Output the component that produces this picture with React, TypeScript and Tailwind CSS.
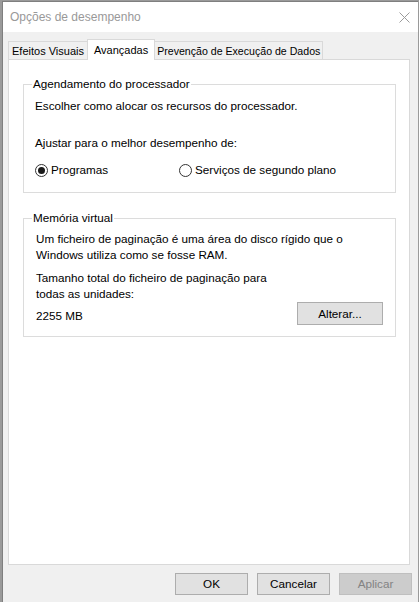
import React from 'react';

const font = "font-['Liberation_Sans',Arial,sans-serif]";

const Radio: React.FC<{ checked?: boolean; label: string; className?: string }> = ({ checked, label, className }) => (
  <label className={`flex items-center gap-[3px] ${className ?? ''}`}>
    <span className="flex h-[13px] w-[13px] items-center justify-center rounded-full border border-[#333333] bg-white">
      {checked && <span className="h-[7px] w-[7px] rounded-full bg-[#1a1a1a]" />}
    </span>
    <span>{label}</span>
  </label>
);

const DialogButton: React.FC<{ label: string; disabled?: boolean; className?: string }> = ({ label, disabled, className }) => (
  <button
    disabled={disabled}
    className={`h-[22px] border text-[11.7px] leading-[16px] ${
      disabled
        ? 'border-[#bfbfbf] bg-[#cccccc] text-[#838383]'
        : 'border-[#adadad] bg-[#e1e1e1] text-black'
    } ${className ?? ''}`}
  >
    {label}
  </button>
);

export default function App() {
  return (
    <div className={`h-[602px] w-[419px] bg-[#9a9a9a] pl-[2px] pt-[1px] ${font} text-[11.7px] leading-[16px] text-black`}>
      <div className="flex h-[601px] w-[416px] flex-col border-l border-t border-[#7f7f7f] bg-[#f0f0f0]">
        {/* title bar */}
        <div className="flex h-[30px] items-center justify-between bg-white pl-[7px] pr-[8px]">
          <span className="text-[12px] text-[#999999]">Opções de desempenho</span>
          <svg width="11" height="11" viewBox="0 0 11 11">
            <path d="M0.5 0.5 L10.5 10.5 M10.5 0.5 L0.5 10.5" stroke="#9b9b9b" strokeWidth="1" fill="none" />
          </svg>
        </div>

        {/* tabs */}
        <div className="ml-[5px] mt-[7px] flex items-end text-[11px]">
          <div className="relative z-0 -mr-px flex h-[18px] items-center border border-b-0 border-[#d9d9d9] bg-[#f0f0f0] px-[3px]">
            Efeitos Visuais
          </div>
          <div className="relative z-10 -mb-px flex h-[21px] items-center border border-b-0 border-[#d9d9d9] bg-white px-[6px]">
            Avançadas
          </div>
          <div className="relative z-0 -ml-px flex h-[18px] items-center border border-b-0 border-[#d9d9d9] bg-[#f0f0f0] px-[2px] text-[10.6px]">
            Prevenção de Execução de Dados
          </div>
        </div>

        {/* tab panel */}
        <div className="ml-[5px] flex h-[506px] w-[402px] flex-col border border-[#d9d9d9] bg-white">
          <fieldset className="ml-[14px] mt-[16px] w-[373px] border border-[#dcdcdc] pb-[14px] pl-[11px] pr-[12px]">
            <legend className="-ml-[3px] px-[1px]">Agendamento do processador</legend>
            <p className="mt-[6px]">Escolher como alocar os recursos do processador.</p>
            <p className="mt-[21px]">Ajustar para o melhor desempenho de:</p>
            <div className="mt-[11px] flex h-[16px] items-center">
              <Radio checked label="Programas" className="w-[144px]" />
              <Radio label="Serviços de segundo plano" />
            </div>
          </fieldset>

          <fieldset className="ml-[14px] mt-[17px] w-[373px] border border-[#dcdcdc] pb-[11px] pl-[12px] pr-[12px]">
            <legend className="-ml-[4px] px-[1px]">Memória virtual</legend>
            <p className="mt-[5px]">
              Um ficheiro de paginação é uma área do disco rígido que o
              <br />
              Windows utiliza como se fosse RAM.
            </p>
            <p className="mt-[7px]">
              Tamanho total do ficheiro de paginação para
              <br />
              todas as unidades:
            </p>
            <div className="flex items-end justify-between">
              <span className="mb-[1px]">2255 MB</span>
              <DialogButton label="Alterar..." className="h-[23px] w-[86px]" />
            </div>
          </fieldset>
        </div>

        {/* bottom buttons */}
        <div className="mr-[6px] mt-[8px] flex justify-end gap-[9px]">
          <DialogButton label="OK" className="w-[73px]" />
          <DialogButton label="Cancelar" className="w-[73px]" />
          <DialogButton label="Aplicar" disabled className="w-[73px]" />
        </div>
      </div>
    </div>
  );
}
